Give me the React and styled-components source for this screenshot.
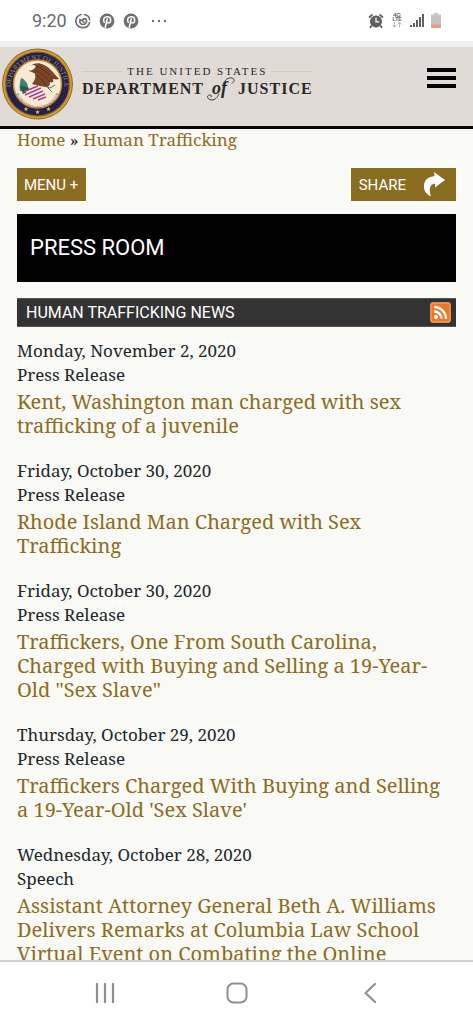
import React from "react";
import styled, { createGlobalStyle } from "styled-components";

const gold = "#8b6d22";
const serif = `"Noto Serif", "DejaVu Serif", serif`;
const sans = `Roboto, "Liberation Sans", sans-serif`;

const GlobalStyle = createGlobalStyle`
  *, *::before, *::after { box-sizing: border-box; }
  body { margin: 0; background: #f9f9f5; }
  button { border: 0; padding: 0; background: none; font: inherit; color: inherit; cursor: pointer; }
  a { color: ${gold}; text-decoration: none; }
  h1, h2, h3, p, ul, ol { margin: 0; padding: 0; font-weight: 400; }
  ul, ol { list-style: none; }
  svg { display: block; }
`;

const Screen = styled.div`
  display: flex;
  flex-direction: column;
  height: 100vh;
  background: #f9f9f5;
  color: #20262b;
  font-family: ${serif};
`;

const StatusBar = styled.div`
  display: flex;
  flex: none;
  align-items: center;
  justify-content: space-between;
  height: 47px;
  padding: 0 32px;
  background: #fff;
  border-bottom: 6px solid #f0f0ee;
  color: #6a6a6a;
  font: 18px/24px ${sans};
`;

const StatusGroup = styled.div`
  display: flex;
  align-items: center;
  gap: ${(p) => p.$gap}px;
`;

const Header = styled.header`
  display: flex;
  flex: none;
  align-items: flex-start;
  height: 82px;
  padding: 1px 17px 0 1px;
  background: #e0dbd5;
  border-bottom: 3px solid #050505;
`;

const Brand = styled.a`
  display: flex;
  gap: 8px;
  color: #28282a;
`;

const BrandName = styled.span`
  display: flex;
  flex-direction: column;
  padding-top: 16px;
  font-family: "Liberation Serif", serif;
  white-space: nowrap;
`;

const BrandTop = styled.span`
  display: flex;
  align-items: center;
  justify-content: center;
  gap: 4px;
  font-size: 11px;
  line-height: 14px;
  letter-spacing: 2px;
  &::before, &::after {
    content: "";
    flex: 1;
    height: 1px;
    background: #d6cbb4;
  }
`;

const BrandMain = styled.span`
  display: flex;
  align-items: baseline;
  gap: 2px;
  font-size: 16px;
  line-height: 20px;
  font-weight: 700;
  letter-spacing: 1px;
`;

const BrandOf = styled.em`
  position: relative;
  width: 30px;
  padding-left: 6px;
  font-size: 18px;
  line-height: 20px;
  letter-spacing: 0;
`;

const Flourish = styled.svg`
  position: absolute;
  top: -1px;
  left: 0;
`;

const MenuIconButton = styled.button`
  display: flex;
  flex-direction: column;
  gap: 4px;
  width: 29px;
  margin: 20px 0 0 auto;
`;

const MenuBar = styled.span`
  height: 4px;
  background: #000;
`;

const Main = styled.main`
  flex: 1;
  min-height: 0;
  padding: 0 17px;
  overflow-y: auto;
  scrollbar-width: none;
`;

const Breadcrumb = styled.nav`
  font-size: 17px;
  line-height: 22px;
`;

const Actions = styled.div`
  display: flex;
  justify-content: space-between;
  margin-top: 17px;
`;

const ActionButton = styled.button`
  display: flex;
  align-items: center;
  gap: 17px;
  height: 33px;
  padding: 0 ${(p) => (p.$share ? 10 : 8)}px 0 ${(p) => (p.$share ? 8 : 7)}px;
  background: ${gold};
  color: #fff;
  font: 15px/20px ${sans};
`;

const Hero = styled.h1`
  margin-top: 13px;
  padding: 20px 13px;
  background: #000;
  color: #fff;
  font: 22px/28px ${sans};
`;

const SectionBar = styled.div`
  display: flex;
  align-items: center;
  justify-content: space-between;
  height: 29px;
  margin-top: 16px;
  padding: 0 5px 0 9px;
  background: #333;
  border: 1px solid #555;
  border-width: 1px 0;
  color: #fff;
`;

const SectionTitle = styled.h2`
  font: 16px/20px ${sans};
`;

const NewsList = styled.ul`
  display: flex;
  flex-direction: column;
  gap: 21px;
  padding: 12px 0 20px;
`;

const Meta = styled.p`
  font-size: 17px;
  line-height: 24px;
`;

const Headline = styled.h3`
  margin-top: 3px;
  padding-right: 4px;
  font-size: 20px;
  line-height: 24px;
`;

const NavBar = styled.nav`
  display: flex;
  flex: none;
  align-items: center;
  justify-content: space-around;
  height: 64px;
  padding: 0 37px 0 39px;
  background: #fff;
  border-top: 2px solid #cfcfcd;
`;

const NavButton = styled.button`
  display: grid;
  place-items: center;
  width: 48px;
  height: 48px;
`;

const Seal = () => (
  <svg width="73" height="73" viewBox="0 0 73 73" role="img" aria-label="Department of Justice seal">
    <defs>
      <path id="sealTop" d="M10.5 46 A27 27 0 1 1 62.500 46" />
      <path id="sealInner" d="M14.500 38 A22 22 0 0 0 58.500 38" />
    </defs>
    <circle cx="36.500" cy="36" r="35.500" fill="#8e6a24" />
    <circle cx="36.500" cy="36" r="33.500" fill="none" stroke="#d09a2f" strokeWidth="2" />
    <circle cx="36.500" cy="36" r="31.500" fill="#25214f" />
    <circle cx="36.500" cy="36" r="24" fill="#f6ead2" stroke="#c18f35" strokeWidth="1.500" />
    <text fill="#a08a58" fontFamily="Liberation Serif, serif" fontSize="7">
      <textPath href="#sealTop" startOffset="50%" textAnchor="middle">DEPARTMENT OF JUSTICE</textPath>
    </text>
    <text fill="#554734" fontFamily="Liberation Serif, serif" fontSize="3">
      <textPath href="#sealInner" startOffset="50%" textAnchor="middle">QUI PRO DOMINA JUSTITIA SEQUITUR</textPath>
    </text>
    <g fill="#e7b94a">
      {[[25, 61], [36.500, 64], [47.500, 61]].map(([x, y]) => (
        <path key={x} transform={`translate(${x} ${y})`} d="M0-2.200.6-.7 2.200-.6 1 .5 1.400 2 0 1.200-1.400 2-1 .5-2.200-.6-.6-.7Z" />
      ))}
    </g>
    <path d="M20 30c3 1 6 4 7 8l-3 6-5-1c-1-5 0-9 1-13Z" fill="#3c8472" />
    <path d="M19 38l8 1 2 4-7 3Z" fill="#235b50" />
    <path d="M24 43l15-5 5 3 2 7-7 4-11-4Z" fill="#f2e6e2" />
    <path d="M22 44l15-6M24 47l16-7M28 49l14-6M32 51l12-5M37 52l8-3" stroke="#9c4a7e" strokeWidth="1.400" />
    <path d="M28 19c4-4 10-5 15-2 5 2 9 7 15 14-3 1-4 0-6 0 1 3 0 4-3 3 0 3-1 5-4 5l-6-1-8-2c3-4 4-7 3-10-2-2-4-2-6-3Z" fill="#7c4527" />
    <path d="M35 18c6 2 12 7 17 13M34 22c6 2 11 7 15 12M35 27c4 2 7 6 10 11" fill="none" stroke="#5a301e" strokeWidth="1" />
    <path d="M27 20c1-3 5-4 8-2l-2 3-4 2Z" fill="#f7f1dc" />
    <path d="M43 38l6 2 5-3M47 40l4 4" stroke="#4b7463" strokeWidth="1" fill="none" />
  </svg>
);

const SwirlIcon = () => (
  <svg width="16" height="16" viewBox="0 0 16 16" fill="none" stroke="#707070" strokeWidth="1.700" strokeLinecap="round" aria-hidden="true">
    <path d="M6 1.500A6.700 6.700 0 0 0 8 14.700a6.700 6.700 0 0 0 6.500-5M9.500 1.500c3 .7 4.800 2.700 5.100 5.200" />
    <path d="M5 6.500C4 10 6.300 11.500 8 11.500s4-1.500 3.500-4C11 5.500 9 5 8 6.500S8 9 9 9M5 6.500l2 1" />
  </svg>
);

const PinterestIcon = () => (
  <svg width="16" height="16" viewBox="0 0 16 16" fill="none" aria-hidden="true">
    <circle cx="8" cy="8" r="7.400" fill="#707070" />
    <path d="M5.200 9.300C3.500 6.500 5.300 3.700 8.300 3.700c4.500 0 4.200 6.400 1 6.400-1 0-1.700-.6-1.800-1.200M8.300 6 6.200 14.500" stroke="#fff" strokeWidth="1.500" strokeLinecap="round" />
  </svg>
);

const MoreIcon = () => (
  <svg width="16" height="4" viewBox="0 0 16 4" fill="#707070" aria-hidden="true">
    <circle cx="2" cy="2" r="1.200" /><circle cx="8" cy="2" r="1.200" /><circle cx="14" cy="2" r="1.200" />
  </svg>
);

const AlarmIcon = () => (
  <svg width="16" height="16" viewBox="0 0 16 16" fill="none" stroke="#606060" aria-hidden="true">
    <path d="M1 4.500 4.500 1.500M15 4.500l-3.500-3M3.500 12.500 2 15M12.500 12.500 14 15" strokeWidth="1.700" />
    <circle cx="8" cy="8.500" r="6" fill="#606060" stroke="none" />
    <path d="M8 4.800v4h3.300" stroke="#fff" strokeWidth="1.300" />
  </svg>
);

const LteIcon = () => (
  <svg width="12" height="17" viewBox="0 0 12 17" aria-label="4G LTE" role="img">
    <g fill="#606060" fontFamily="Liberation Sans, sans-serif" fontWeight="700" textAnchor="middle">
      <text x="6" y="5" fontSize="6">4G</text>
      <text x="6" y="9" fontSize="5">LTE</text>
    </g>
    <path d="M3.500 10v5M1.500 13l2 2.200 2-2.200M8.500 15.500v-5M6.500 12.500l2-2.200 2 2.200" fill="none" stroke="#b5b5b5" />
  </svg>
);

const SignalIcon = () => (
  <svg width="14" height="15" viewBox="0 0 14 15" fill="#606060" aria-hidden="true">
    <path d="M0 12h2v2H0zM3 10h2v4H3zM6 7h2v7H6zM9 4h2v10H9zM12 1h2v13H12z" />
  </svg>
);

const BatteryIcon = () => (
  <svg width="10" height="15" viewBox="0 0 10 15" aria-hidden="true">
    <path d="M3 0h4v1.500h2q1 0 1 1V14q0 1-1 1H1q-1 0-1-1V2.500q0-1 1-1h2Z" fill="#c4c4c2" />
    <path d="M0 11.500h10V14q0 1-1 1H1q-1 0-1-1Z" fill="#f0997c" />
  </svg>
);

const ShareArrow = () => (
  <svg width="23" height="25" viewBox="0 0 23 25" fill="#fff" aria-hidden="true">
    <path d="M11 0 22 8 12 15.500V11.500C7 12 5.500 17 8 24.500 2.500 22 .5 17.500 1 13 1.700 7.500 6 4.500 11.500 4.300Z" />
  </svg>
);

const RssIcon = () => (
  <svg width="21" height="21" viewBox="0 0 21 21" aria-hidden="true">
    <rect width="21" height="21" rx="3" fill="#e9792e" />
    <rect x="1" y="1" width="19" height="19" rx="2" fill="none" stroke="#f5a76b" />
    <circle cx="6" cy="15" r="2" fill="#fff" />
    <path d="M4.200 9.500a7.300 7.300 0 0 1 7.300 7.300M4.200 5a11.800 11.800 0 0 1 11.800 11.800" fill="none" stroke="#fff" strokeWidth="2.300" />
  </svg>
);

const news = [
  ["Monday, November 2, 2020", "Press Release", "Kent, Washington man charged with sex trafficking of a juvenile"],
  ["Friday, October 30, 2020", "Press Release", "Rhode Island Man Charged with Sex Trafficking"],
  ["Friday, October 30, 2020", "Press Release", "Traffickers, One From South Carolina, Charged with Buying and Selling a 19-Year-Old \"Sex Slave\""],
  ["Thursday, October 29, 2020", "Press Release", "Traffickers Charged With Buying and Selling a 19-Year-Old 'Sex Slave'"],
  ["Wednesday, October 28, 2020", "Speech", "Assistant Attorney General Beth A. Williams Delivers Remarks at Columbia Law School Virtual Event on Combating the Online"],
];

export default function App() {
  return (
    <Screen>
      <GlobalStyle />
      <StatusBar>
        <StatusGroup $gap={8}>
          <span>9:20</span>
          <SwirlIcon />
          <PinterestIcon />
          <PinterestIcon />
          <StatusGroup $gap={0}>&nbsp;<MoreIcon /></StatusGroup>
        </StatusGroup>
        <StatusGroup $gap={7}>
          <AlarmIcon />
          <LteIcon />
          <SignalIcon />
          <BatteryIcon />
        </StatusGroup>
      </StatusBar>
      <Header>
        <Brand href="#">
          <Seal />
          <BrandName>
            <BrandTop>THE UNITED STATES</BrandTop>
            <BrandMain>
              DEPARTMENT
              <BrandOf>
                of
                <Flourish width="30" height="26" viewBox="0 0 30 26" fill="none" stroke="#3c3c3e" strokeLinecap="round" aria-hidden="true">
                  <path d="M26 6c3-1 3-4 0-5-4-1-7 2-9 6M13 17c-2 4-4 6-7 6-5 0-6-5-2-5 2 0 2 2 1 2" />
                </Flourish>
              </BrandOf>
              JUSTICE
            </BrandMain>
          </BrandName>
        </Brand>
        <MenuIconButton aria-label="Open navigation">
          <MenuBar /><MenuBar /><MenuBar />
        </MenuIconButton>
      </Header>
      <Main>
        <Breadcrumb aria-label="Breadcrumb">
          <a href="#">Home</a> » <a href="#">Human Trafficking</a>
        </Breadcrumb>
        <Actions>
          <ActionButton>MENU +</ActionButton>
          <ActionButton $share>SHARE <ShareArrow /></ActionButton>
        </Actions>
        <Hero>PRESS ROOM</Hero>
        <SectionBar>
          <SectionTitle>HUMAN TRAFFICKING NEWS</SectionTitle>
          <a href="#" aria-label="RSS feed"><RssIcon /></a>
        </SectionBar>
        <NewsList>
          {news.map(([date, kind, title]) => (
            <li key={title}>
              <Meta>{date}</Meta>
              <Meta>{kind}</Meta>
              <Headline><a href="#">{title}</a></Headline>
            </li>
          ))}
        </NewsList>
      </Main>
      <NavBar aria-label="System">
        <NavButton aria-label="Recent apps">
          <svg width="20" height="20" viewBox="0 0 20 20" stroke="#8f8f8f" strokeWidth="2.200" strokeLinecap="round"><path d="M2 1v18M10 1v18M18 1v18" /></svg>
        </NavButton>
        <NavButton aria-label="Home">
          <svg width="22" height="22" viewBox="0 0 22 22" fill="none" stroke="#8f8f8f" strokeWidth="2"><rect x="1.500" y="1.500" width="19" height="19" rx="6" /></svg>
        </NavButton>
        <NavButton aria-label="Back">
          <svg width="12" height="20" viewBox="0 0 12 20" fill="none" stroke="#8f8f8f" strokeWidth="2.200" strokeLinecap="round" strokeLinejoin="round"><path d="M11 1 1.500 10 11 19" /></svg>
        </NavButton>
      </NavBar>
    </Screen>
  );
}
